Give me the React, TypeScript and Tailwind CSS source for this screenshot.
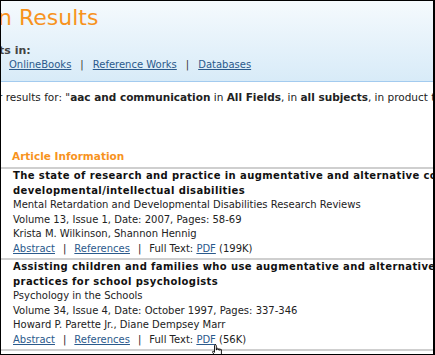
export default function App() {
  const link = "text-[#2b5a8c] underline";
  const sep = <span className="mx-[9px] text-[#333]">|</span>;
  return (
    <div className="relative w-[435px] h-[355px] overflow-hidden border-t border-l border-b border-r-2 border-black bg-white font-['DejaVu_Sans',sans-serif] text-[#222]">
      <div className="h-[81px] border-b border-[#a3cbef] bg-gradient-to-b from-[#f5fafd] to-[#d8ebf8] flex flex-col">
        <div className="-ml-[3px] mt-[3px] text-[22px] leading-[28px] text-[#f7931e]">n Results</div>
        <div className="-ml-[2px] mt-[12px] text-[11px] leading-[14px] font-bold text-[#444]">ts in:</div>
        <div className="ml-[8px] text-[10px] leading-[14px] flex">
          <span className={link}>OnlineBooks</span>
          {sep}
          <span className={link}>Reference Works</span>
          {sep}
          <span className={link}>Databases</span>
        </div>
      </div>
      <div className="-ml-[3px] mt-[8px] text-[10.5px] leading-[14px] whitespace-nowrap text-[#222]">
        r results for: "<b>aac and communication</b> in <b>All Fields</b>, in <b>all subjects</b>, in product types
      </div>
      <div className="ml-[11px] mt-[45px] text-[10.5px] leading-[14px] font-bold text-[#f7931e]">Article Information</div>
      <div className="mt-[4px] h-[2px] bg-[#cfcfcf]" />
      <Item
        title={<>The state of research and practice in augmentative and alternative communication for persons with<br />developmental/intellectual disabilities</>}
        journal="Mental Retardation and Developmental Disabilities Research Reviews"
        vol="Volume 13, Issue 1, Date: 2007, Pages: 58-69"
        authors="Krista M. Wilkinson, Shannon Hennig"
        size="(199K)"
      />
      <div className="h-[2px] bg-[#cfcfcf]" />
      <Item
        title={<>Assisting children and families who use augmentative and alternative communication devices: Best<br />practices for school psychologists</>}
        journal="Psychology in the Schools"
        vol="Volume 34, Issue 4, Date: October 1997, Pages: 337-346"
        authors="Howard P. Parette Jr., Diane Dempsey Marr"
        size="(56K)"
      />
      <div className="h-[2px] bg-[#cfcfcf]" />
      <div className="ml-[12px] pt-[3px] text-[10px] leading-[14.5px] font-bold tracking-[0.4px] whitespace-nowrap">Augmentative and alternative communication for children with disabilities</div>
      <svg className="absolute left-[209px] top-[342px]" width="16" height="16" viewBox="0 0 16 16">
        <path d="M5 1.5c.8 0 1.3.5 1.3 1.3V7h.4V5.8c0-.8 1.3-.8 1.3 0V7h.4V6.3c0-.8 1.3-.8 1.3 0V7.3h.4V6.8c0-.8 1.3-.8 1.3 0v4.2c0 1.8-1 3.5-2.5 3.5H7.2c-1 0-1.6-.6-2.2-1.5L2.6 9.3c-.4-.7.5-1.4 1.1-.8l.8.9V2.8c0-.8.5-1.3.5-1.3z" fill="#fff" stroke="#000" strokeWidth="0.9" />
      </svg>
    </div>
  );
}

function Item(p: { title: React.ReactNode; journal: string; vol: string; authors: string; size: string }) {
  const link = "text-[#2b5a8c] underline";
  return (
    <div className="pl-[12px] pt-0 pb-[2px] text-[10px] leading-[14.5px] whitespace-nowrap">
      <div className="font-bold tracking-[0.4px] text-[#111]">{p.title}</div>
      <div>{p.journal}</div>
      <div>{p.vol}</div>
      <div>{p.authors}</div>
      <div>
        <span className={link}>Abstract</span>
        <span className="mx-[8px]">|</span>
        <span className={link}>References</span>
        <span className="mx-[8px]">|</span>
        <span>Full Text: </span>
        <span className={link}>PDF</span> <span>{p.size}</span>
      </div>
    </div>
  );
}
